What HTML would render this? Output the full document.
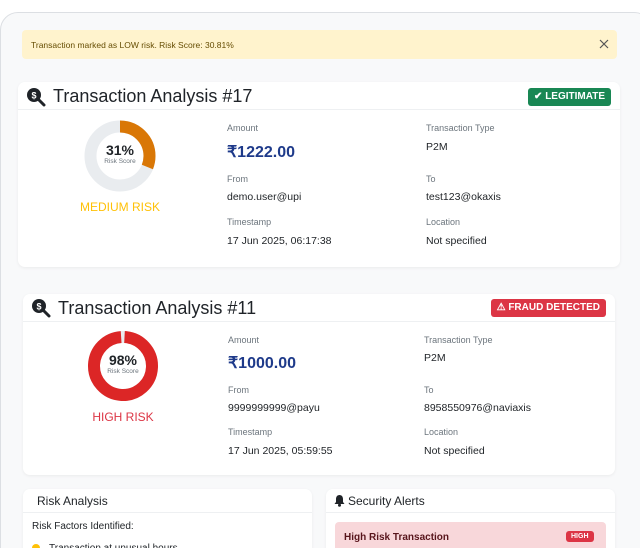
<!DOCTYPE html>
<html><head><style>
*{margin:0;padding:0;box-sizing:border-box}
html,body{width:640px;height:548px;overflow:hidden}
body{background:#fff;font-family:"Liberation Sans",sans-serif;color:#212529;position:relative}
.outer{position:absolute;left:0;top:12px;width:652px;height:560px;border:1px solid #dcdfe3;border-radius:18px;background:#f8f9fa}
.alert{position:absolute;left:22px;top:30px;width:595px;height:29px;background:#fff3cd;border-radius:4px;font-size:8.5px;color:#664d03;padding:10px 9px}
.card{position:absolute;background:#fff;border-radius:7px;box-shadow:0 1px 3px rgba(0,0,0,.06);overflow:hidden}
.hd{position:absolute;left:0;right:0;top:0;border-bottom:1px solid #eef0f2}
.title{position:absolute;font-size:18px;color:#1f2328}
.badge{position:absolute;right:9px;white-space:nowrap;color:#fff;font-size:10px;font-weight:bold;border-radius:3px;padding:3px 6px;height:18px}
.lbl{position:absolute;font-size:9px;color:#6c757d}
.val{position:absolute;font-size:10.5px;color:#212529}
.amt{position:absolute;font-size:16px;font-weight:bold;color:#1e3a8a}
.risk{position:absolute;font-size:12px;width:120px;text-align:center}
</style></head><body>
<div class="outer"></div>
<div class="alert">Transaction marked as LOW risk. Risk Score: 30.81%
<svg style="position:absolute;right:8px;top:9px" width="10" height="10" viewBox="0 0 10 10"><path d="M1 1L9 9M9 1L1 9" stroke="#555" stroke-width="1.2"/></svg></div>

<div class="card" style="left:18px;top:82px;width:602px;height:185px">
 <div class="hd" style="height:28px"></div>
 <svg style="position:absolute;left:8px;top:5px" width="20" height="20" viewBox="0 0 20 20"><circle cx="8" cy="8" r="7" fill="#1f2328"/><line x1="13" y1="13" x2="18" y2="18" stroke="#1f2328" stroke-width="3" stroke-linecap="round"/><text x="8" y="11.5" font-size="9" font-weight="bold" fill="#fff" text-anchor="middle" font-family="Liberation Sans">$</text></svg>
 <div class="title" style="left:35px;top:4px">Transaction Analysis #17</div>
 <div class="badge" style="top:6px;background:#198754">✔ LEGITIMATE</div>
 <svg style="position:absolute;left:66px;top:38px" width="72" height="72" viewBox="0 0 72 72"><circle cx="36" cy="36" r="29.5" fill="none" stroke="#e9ecef" stroke-width="12"/><circle cx="36" cy="36" r="29.5" fill="none" stroke="#d97706" stroke-width="12" stroke-dasharray="57.5 200" transform="rotate(-90 36 36)"/></svg>
 <div style="position:absolute;left:66px;top:60px;width:72px;text-align:center;font-size:14px;font-weight:bold">31%</div>
 <div style="position:absolute;left:66px;top:76px;width:72px;text-align:center;font-size:6.5px;color:#6c757d">Risk Score</div>
 <div class="risk" style="left:42px;top:118px;color:#ffc107">MEDIUM RISK</div>
 <div class="lbl" style="left:209px;top:41px">Amount</div>
 <div class="amt" style="left:209px;top:60px">₹1222.00</div>
 <div class="lbl" style="left:408px;top:41px">Transaction Type</div>
 <div class="val" style="left:408px;top:59px">P2M</div>
 <div class="lbl" style="left:209px;top:92px">From</div>
 <div class="val" style="left:209px;top:109px">demo.user@upi</div>
 <div class="lbl" style="left:408px;top:92px">To</div>
 <div class="val" style="left:408px;top:109px">test123@okaxis</div>
 <div class="lbl" style="left:209px;top:135px">Timestamp</div>
 <div class="val" style="left:209px;top:153px">17 Jun 2025, 06:17:38</div>
 <div class="lbl" style="left:408px;top:135px">Location</div>
 <div class="val" style="left:408px;top:153px">Not specified</div>
</div>

<div class="card" style="left:23px;top:294px;width:592px;height:181px">
 <div class="hd" style="height:28px"></div>
 <svg style="position:absolute;left:8px;top:4px" width="20" height="20" viewBox="0 0 20 20"><circle cx="8" cy="8" r="7" fill="#1f2328"/><line x1="13" y1="13" x2="18" y2="18" stroke="#1f2328" stroke-width="3" stroke-linecap="round"/><text x="8" y="11.5" font-size="9" font-weight="bold" fill="#fff" text-anchor="middle" font-family="Liberation Sans">$</text></svg>
 <div class="title" style="left:35px;top:4px">Transaction Analysis #11</div>
 <div class="badge" style="top:5px;background:#dc3545">⚠ FRAUD DETECTED</div>
 <svg style="position:absolute;left:64px;top:36px" width="72" height="72" viewBox="0 0 72 72"><circle cx="36" cy="36" r="29" fill="none" stroke="#e9ecef" stroke-width="12"/><circle cx="36" cy="36" r="29" fill="none" stroke="#dc2626" stroke-width="12" stroke-dasharray="178.5 200" transform="rotate(-87 36 36)"/></svg>
 <div style="position:absolute;left:64px;top:58px;width:72px;text-align:center;font-size:14px;font-weight:bold">98%</div>
 <div style="position:absolute;left:64px;top:74px;width:72px;text-align:center;font-size:6.5px;color:#6c757d">Risk Score</div>
 <div class="risk" style="left:40px;top:116px;color:#dc3545">HIGH RISK</div>
 <div class="lbl" style="left:205px;top:41px">Amount</div>
 <div class="amt" style="left:205px;top:59px">₹1000.00</div>
 <div class="lbl" style="left:401px;top:41px">Transaction Type</div>
 <div class="val" style="left:401px;top:58px">P2M</div>
 <div class="lbl" style="left:205px;top:91px">From</div>
 <div class="val" style="left:205px;top:108px">9999999999@payu</div>
 <div class="lbl" style="left:401px;top:91px">To</div>
 <div class="val" style="left:401px;top:108px">8958550976@naviaxis</div>
 <div class="lbl" style="left:205px;top:133px">Timestamp</div>
 <div class="val" style="left:205px;top:151px">17 Jun 2025, 05:59:55</div>
 <div class="lbl" style="left:401px;top:133px">Location</div>
 <div class="val" style="left:401px;top:151px">Not specified</div>
</div>

<div class="card" style="left:23px;top:489px;width:289px;height:80px">
 <div class="hd" style="height:24px"></div>
 <div style="position:absolute;left:14px;top:5px;font-size:12px">Risk Analysis</div>
 <div style="position:absolute;left:9px;top:32px;font-size:10px">Risk Factors Identified:</div>
 <div style="position:absolute;left:9px;top:55px;width:8px;height:8px;border-radius:50%;background:#ffc107"></div>
 <div style="position:absolute;left:26px;top:54px;font-size:10px;color:#212529">Transaction at unusual hours</div>
</div>
<div class="card" style="left:326px;top:489px;width:289px;height:80px">
 <div class="hd" style="height:24px"></div>
 <svg style="position:absolute;left:8px;top:5px" width="11" height="13" viewBox="0 0 11 13"><path d="M5.5 1C3.3 1 2 2.8 2 5v3L0.5 10h10L9 8V5C9 2.8 7.7 1 5.5 1z" fill="#1f2328"/><circle cx="5.5" cy="11.3" r="1.5" fill="#1f2328"/></svg>
 <div style="position:absolute;left:22px;top:5px;font-size:12px">Security Alerts</div>
 <div style="position:absolute;left:9px;top:33px;width:271px;height:40px;background:#f8d7da;border-radius:4px"></div>
 <div style="position:absolute;left:18px;top:43px;font-size:10px;font-weight:bold;color:#58151c">High Risk Transaction</div>
 <div style="position:absolute;left:240px;top:42px;font-size:7px;font-weight:bold;color:#fff;background:#dc3545;border-radius:3px;padding:2px 5px">HIGH</div>
</div>
</body></html>
